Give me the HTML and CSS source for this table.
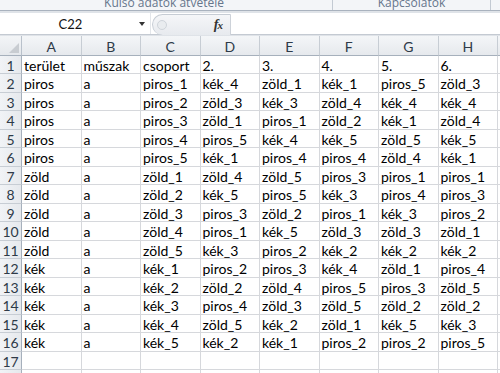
FILE: index.html
```html
<!DOCTYPE html>
<html lang="hu">
<head>
<meta charset="utf-8">
<title>Munkalap</title>
<link rel="stylesheet" href="styles.css">
</head>
<body>
<div class="ribbon">
  <div class="rgroup g1"><span class="rlabel">Külső adatok átvétele</span></div>
  <div class="rgroup g2"><span class="rlabel">Kapcsolatok</span></div>
  <div class="rgroup g3"></div>
</div>
<div class="band"></div>
<div class="fbar">
  <div class="namebox"><span class="nametext">C22</span><span class="ndrop"></span></div>
  <div class="fxzone">
    <span class="grip"></span>
    <span class="fx"><i>f</i><i class="x">x</i></span>
  </div>
  <div class="finput"></div>
</div>
<div class="sheet">
  <div class="corner"><span class="tri"></span></div>
  <div class="ch">A</div><div class="ch">B</div><div class="ch">C</div><div class="ch">D</div><div class="ch">E</div><div class="ch">F</div><div class="ch">G</div><div class="ch">H</div><div class="ch"></div>

  <div class="rh">1</div><div class="c">terület</div><div class="c">műszak</div><div class="c">csoport</div><div class="c">2.</div><div class="c">3.</div><div class="c">4.</div><div class="c">5.</div><div class="c">6.</div><div class="c"></div>
  <div class="rh">2</div><div class="c">piros</div><div class="c">a</div><div class="c">piros_1</div><div class="c">kék_4</div><div class="c">zöld_1</div><div class="c">kék_1</div><div class="c">piros_5</div><div class="c">zöld_3</div><div class="c"></div>
  <div class="rh">3</div><div class="c">piros</div><div class="c">a</div><div class="c">piros_2</div><div class="c">zöld_3</div><div class="c">kék_3</div><div class="c">zöld_4</div><div class="c">kék_4</div><div class="c">kék_4</div><div class="c"></div>
  <div class="rh">4</div><div class="c">piros</div><div class="c">a</div><div class="c">piros_3</div><div class="c">zöld_1</div><div class="c">piros_1</div><div class="c">zöld_2</div><div class="c">kék_1</div><div class="c">zöld_4</div><div class="c"></div>
  <div class="rh">5</div><div class="c">piros</div><div class="c">a</div><div class="c">piros_4</div><div class="c">piros_5</div><div class="c">kék_4</div><div class="c">kék_5</div><div class="c">zöld_5</div><div class="c">kék_5</div><div class="c"></div>
  <div class="rh">6</div><div class="c">piros</div><div class="c">a</div><div class="c">piros_5</div><div class="c">kék_1</div><div class="c">piros_4</div><div class="c">piros_4</div><div class="c">zöld_4</div><div class="c">kék_1</div><div class="c"></div>
  <div class="rh">7</div><div class="c">zöld</div><div class="c">a</div><div class="c">zöld_1</div><div class="c">zöld_4</div><div class="c">zöld_5</div><div class="c">piros_3</div><div class="c">piros_1</div><div class="c">piros_1</div><div class="c"></div>
  <div class="rh">8</div><div class="c">zöld</div><div class="c">a</div><div class="c">zöld_2</div><div class="c">kék_5</div><div class="c">piros_5</div><div class="c">kék_3</div><div class="c">piros_4</div><div class="c">piros_3</div><div class="c"></div>
  <div class="rh">9</div><div class="c">zöld</div><div class="c">a</div><div class="c">zöld_3</div><div class="c">piros_3</div><div class="c">zöld_2</div><div class="c">piros_1</div><div class="c">kék_3</div><div class="c">piros_2</div><div class="c"></div>
  <div class="rh">10</div><div class="c">zöld</div><div class="c">a</div><div class="c">zöld_4</div><div class="c">piros_1</div><div class="c">kék_5</div><div class="c">zöld_3</div><div class="c">zöld_3</div><div class="c">zöld_1</div><div class="c"></div>
  <div class="rh">11</div><div class="c">zöld</div><div class="c">a</div><div class="c">zöld_5</div><div class="c">kék_3</div><div class="c">piros_2</div><div class="c">kék_2</div><div class="c">kék_2</div><div class="c">kék_2</div><div class="c"></div>
  <div class="rh">12</div><div class="c">kék</div><div class="c">a</div><div class="c">kék_1</div><div class="c">piros_2</div><div class="c">piros_3</div><div class="c">kék_4</div><div class="c">zöld_1</div><div class="c">piros_4</div><div class="c"></div>
  <div class="rh">13</div><div class="c">kék</div><div class="c">a</div><div class="c">kék_2</div><div class="c">zöld_2</div><div class="c">zöld_4</div><div class="c">piros_5</div><div class="c">piros_3</div><div class="c">zöld_5</div><div class="c"></div>
  <div class="rh">14</div><div class="c">kék</div><div class="c">a</div><div class="c">kék_3</div><div class="c">piros_4</div><div class="c">zöld_3</div><div class="c">zöld_5</div><div class="c">zöld_2</div><div class="c">zöld_2</div><div class="c"></div>
  <div class="rh">15</div><div class="c">kék</div><div class="c">a</div><div class="c">kék_4</div><div class="c">zöld_5</div><div class="c">kék_2</div><div class="c">zöld_1</div><div class="c">kék_5</div><div class="c">kék_3</div><div class="c"></div>
  <div class="rh">16</div><div class="c">kék</div><div class="c">a</div><div class="c">kék_5</div><div class="c">kék_2</div><div class="c">kék_1</div><div class="c">piros_2</div><div class="c">piros_2</div><div class="c">piros_5</div><div class="c"></div>
  <div class="rh">17</div><div class="c"></div><div class="c"></div><div class="c"></div><div class="c"></div><div class="c"></div><div class="c"></div><div class="c"></div><div class="c"></div><div class="c"></div>
  <div class="rh"></div><div class="c"></div><div class="c"></div><div class="c"></div><div class="c"></div><div class="c"></div><div class="c"></div><div class="c"></div><div class="c"></div><div class="c"></div>
</div>
</body>
</html>
```
FILE: styles.css
```css
* { box-sizing: border-box; }
html, body {
  margin: 0;
  padding: 0;
  width: 500px;
  height: 373px;
  overflow: hidden;
  background: #ffffff;
}
body {
  font-family: "Lato", "Liberation Sans", sans-serif;
  color: #000;
}

/* ribbon strip */
.ribbon {
  display: flex;
  height: 11px;
  background: #f3f5f8;
  border-bottom: 1px solid #a9b2be;
  overflow: hidden;
}
.rgroup {
  height: 10px;
  overflow: hidden;
  text-align: center;
  border-right: 1px solid #c3cad3;
}
.g1 { width: 333px; }
.g2 { width: 158px; }
.g3 { flex: 1; border-right: none; }
.rlabel {
  display: block;
  font-family: "Open Sans", "Liberation Sans", sans-serif;
  font-size: 12px;
  line-height: 12px;
  margin-top: -3px;
  color: #66768c;
}
.g1 .rlabel { padding-right: 4px; }
.band {
  height: 2px;
  background: #dfe3e8;
}

/* formula bar */
.fbar {
  display: flex;
  height: 22px;
  background: #ffffff;
  border-bottom: 1px solid #c4cad2;
}
.namebox {
  width: 151px;
  display: flex;
  align-items: center;
  border-right: 1px solid #e3e6ea;
}
.nametext {
  flex: 1;
  text-align: center;
  font-size: 13px;
  color: #111;
  padding-left: 2px;
}
.ndrop {
  width: 0;
  height: 0;
  margin-right: 5px;
  border-left: 3px solid transparent;
  border-right: 3px solid transparent;
  border-top: 4px solid #333;
}
.fxzone {
  width: 79px;
  display: flex;
  align-items: center;
  justify-content: space-between;
  margin: 1px 0 0 1px;
  height: 21px;
  background: linear-gradient(#f5f6f8, #e7eaee);
  border: 1px solid #c6ccd4;
  border-right: 1px solid #cdd2d9;
  border-bottom: none;
  border-radius: 11px 0 0 11px;
  padding: 0 8px 0 4px;
}
.grip {
  width: 10px;
  height: 10px;
  border-radius: 50%;
  border: 1px solid #cfd4da;
  background: #e9ecef;
}
.fx {
  font-family: "Liberation Serif", serif;
  font-size: 14px;
  font-weight: bold;
  color: #333;
  letter-spacing: -1px;
}
.fx .x { font-size: 11px; }
.finput {
  flex: 1;
  background: #fff;
}

/* sheet grid */
.sheet {
  display: grid;
  grid-template-columns: 22px repeat(8, 59.5px) 1fr;
  grid-template-rows: 19.5px repeat(18, 18.5px);
  border-top: 1px solid #dfe3e8;
}
.corner {
  background: linear-gradient(#f3f5f7, #e5e8ec);
  border-right: 1px solid #b9c1cb;
  border-bottom: 1px solid #a6b0bc;
  display: flex;
  align-items: flex-end;
  justify-content: flex-end;
  padding: 0 2px 2px 0;
}
.tri {
  width: 0;
  height: 0;
  border-left: 10px solid transparent;
  border-bottom: 10px solid #c8ccd1;
}
.ch {
  background: linear-gradient(#f4f6f8, #e6e9ed);
  border-right: 1px solid #c7cdd4;
  border-bottom: 1px solid #a6b0bc;
  text-align: center;
  font-size: 14px;
  line-height: 17px;
  padding-top: 1.5px;
  color: #2e3a48;
}
.rh {
  background: linear-gradient(90deg, #f1f3f6, #e6e9ed);
  border-right: 1px solid #a6b0bc;
  border-bottom: 1px solid #c7cdd4;
  text-align: center;
  font-size: 14px;
  line-height: 17px;
  padding-top: 1px;
  color: #2e3a48;
}
.c {
  border-right: 1px solid #d6d8dc;
  border-bottom: 1px solid #d6d8dc;
  font-size: 14px;
  line-height: 17px;
  padding-top: 1px;
  padding-left: 2px;
  white-space: nowrap;
}
```
